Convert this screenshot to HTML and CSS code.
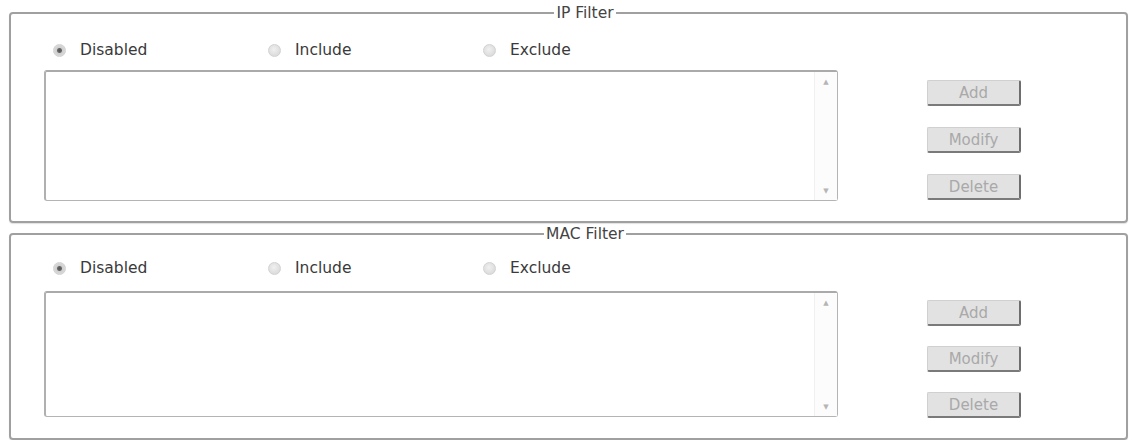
FILE: index.html
```html
<!DOCTYPE html>
<html lang="en">
<head>
    <meta charset="UTF-8">
    <title>Filter Settings</title>
    <link rel="stylesheet" href="styles.css">
</head>
<body>
    <fieldset class="filter">
        <legend>IP Filter</legend>
        <div class="modes">
            <label class="mode"><input type="radio" name="ipMode" checked><span>Disabled</span></label>
            <label class="mode"><input type="radio" name="ipMode"><span>Include</span></label>
            <label class="mode"><input type="radio" name="ipMode"><span>Exclude</span></label>
        </div>
        <div class="body">
            <div class="list">
                <div class="items"></div>
                <div class="scroll"><span>&#9650;</span><span>&#9660;</span></div>
            </div>
            <div class="actions">
                <button type="button">Add</button>
                <button type="button">Modify</button>
                <button type="button">Delete</button>
            </div>
        </div>
    </fieldset>

    <fieldset class="filter second">
        <legend>MAC Filter</legend>
        <div class="modes">
            <label class="mode"><input type="radio" name="macMode" checked><span>Disabled</span></label>
            <label class="mode"><input type="radio" name="macMode"><span>Include</span></label>
            <label class="mode"><input type="radio" name="macMode"><span>Exclude</span></label>
        </div>
        <div class="body">
            <div class="list">
                <div class="items"></div>
                <div class="scroll"><span>&#9650;</span><span>&#9660;</span></div>
            </div>
            <div class="actions">
                <button type="button">Add</button>
                <button type="button">Modify</button>
                <button type="button">Delete</button>
            </div>
        </div>
    </fieldset>
</body>
</html>
```

FILE: styles.css
```css
body {
    margin: 0;
    padding: 4px 6px 0 9px;
    background-color: #fff;
    font-family: "DejaVu Sans", Verdana, sans-serif;
    font-size: 15.5px;
    color: #3a3a3a;
}

.filter {
    margin: 0;
    padding: 0 0 20px 33px;
    border: 2px solid #a0a0a0;
    border-radius: 4px;
    box-shadow: 0 1px 1px rgba(0, 0, 0, 0.12);
}

.second {
    margin-top: 2px;
}

legend {
    margin: 0 auto;
    padding: 0 2px;
    color: #444;
    line-height: 18px;
}

.modes {
    display: flex;
    margin: 18px 0 0 9px;
    height: 20px;
}

.second .modes {
    margin-top: 15px;
}

.mode {
    display: flex;
    align-items: center;
    width: 215px;
}

.mode input {
    appearance: none;
    -webkit-appearance: none;
    width: 13px;
    height: 13px;
    margin: 0 14px 0 0;
    border: 1px solid #d2d2d2;
    border-radius: 50%;
    background: radial-gradient(circle at 45% 40%, #f0f0f0, #d4d4d4);
}

.mode input:checked {
    background: radial-gradient(circle, #555 0, #666 2px, #cfcfcf 3px, #e2e2e2 100%);
}

.body {
    display: flex;
    margin-top: 10px;
}

.second .body {
    margin-top: 13px;
}

.list {
    display: flex;
    width: 791px;
    height: 128px;
    border: 1px solid #b4b4b4;
    border-top: 2px solid #aaa;
    border-left: 2px solid #b0b0b0;
    border-radius: 3px;
}

.second .list {
    height: 123px;
}

.items {
    flex: 1;
}

.scroll {
    display: flex;
    flex-direction: column;
    justify-content: space-between;
    align-items: center;
    width: 22px;
    padding: 6px 0 5px;
    border-left: 1px solid #f0f0f0;
    background-color: #fcfcfc;
    color: #b5b5b5;
    font-size: 7px;
}

.actions {
    display: flex;
    flex-direction: column;
    gap: 21px;
    margin: 10px 0 0 89px;
}

.second .actions {
    gap: 20px;
    margin-top: 9px;
}

button {
    width: 94px;
    height: 26px;
    padding: 0;
    font-family: inherit;
    font-size: 15px;
    color: #a9a9a9;
    background-color: #e2e2e2;
    border: 1px solid #d0d0d0;
    border-right: 2px solid #6e6e6e;
    border-bottom: 2px solid #7a7a7a;
    border-radius: 2px;
}
```
